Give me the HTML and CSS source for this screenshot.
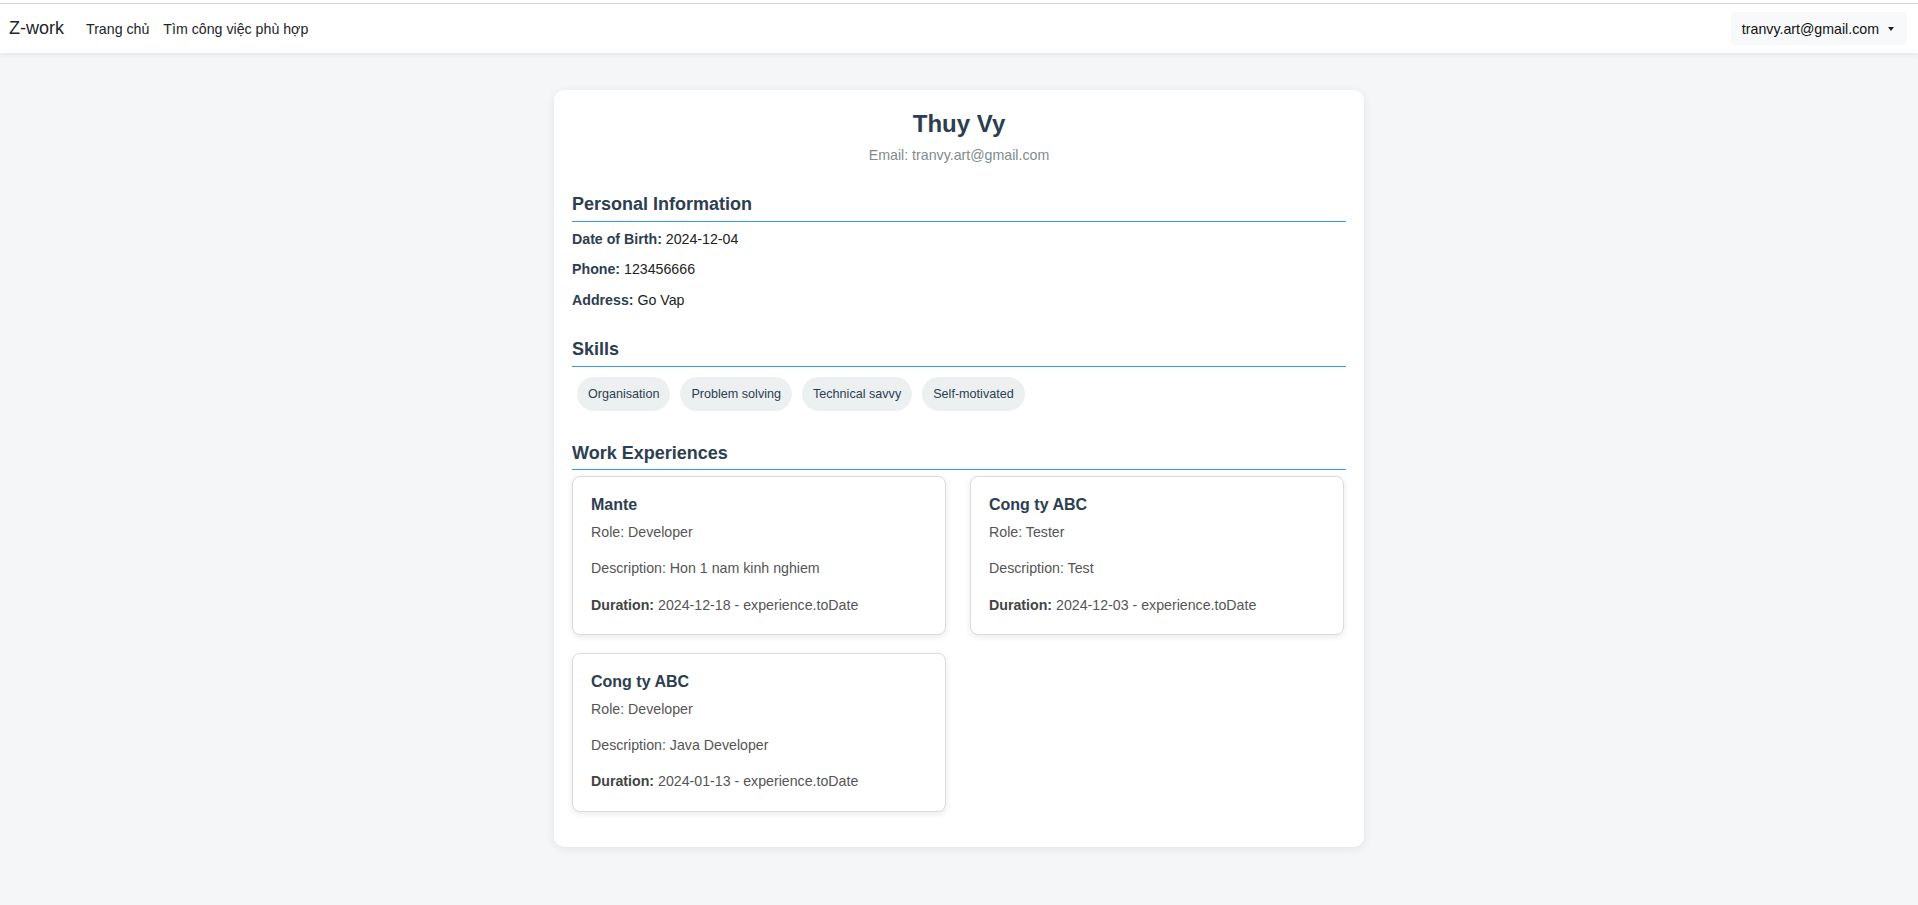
FILE: index.html
```html
<!DOCTYPE html>
<html lang="vi">
<head>
<meta charset="utf-8">
<title>Z-work - Thuy Vy</title>
<link rel="stylesheet" href="styles.css">
</head>
<body>
<header class="site-header">
  <nav class="navbar">
    <a class="brand" href="#">Z-work</a>
    <ul class="nav-links">
      <li><a href="#">Trang chủ</a></li>
      <li><a href="#">Tìm công việc phù hợp</a></li>
    </ul>
    <div class="user-menu">
      <button class="dropdown-toggle" type="button">tranvy.art@gmail.com<span class="caret"></span></button>
    </div>
  </nav>
</header>

<main class="page">
  <article class="profile-card">
    <div class="profile-head">
      <h1 class="profile-name">Thuy Vy</h1>
      <p class="profile-email">Email: tranvy.art@gmail.com</p>
    </div>

    <section class="section">
      <h2 class="section-title">Personal Information</h2>
      <p class="info-row"><strong>Date of Birth:</strong> 2024-12-04</p>
      <p class="info-row"><strong>Phone:</strong> 123456666</p>
      <p class="info-row"><strong>Address:</strong> Go Vap</p>
    </section>

    <section class="section">
      <h2 class="section-title">Skills</h2>
      <div class="skill-list">
        <span class="skill">Organisation</span>
        <span class="skill">Problem solving</span>
        <span class="skill">Technical savvy</span>
        <span class="skill">Self-motivated</span>
      </div>
    </section>

    <section class="section section-work">
      <h2 class="section-title">Work Experiences</h2>
      <div class="exp-grid">
        <div class="exp-card">
          <h3 class="exp-company">Mante</h3>
          <p>Role: Developer</p>
          <p>Description: Hon 1 nam kinh nghiem</p>
          <p><strong>Duration:</strong> 2024-12-18 - experience.toDate</p>
        </div>
        <div class="exp-card">
          <h3 class="exp-company">Cong ty ABC</h3>
          <p>Role: Tester</p>
          <p>Description: Test</p>
          <p><strong>Duration:</strong> 2024-12-03 - experience.toDate</p>
        </div>
        <div class="exp-card">
          <h3 class="exp-company">Cong ty ABC</h3>
          <p>Role: Developer</p>
          <p>Description: Java Developer</p>
          <p><strong>Duration:</strong> 2024-01-13 - experience.toDate</p>
        </div>
      </div>
    </section>
  </article>
</main>
</body>
</html>
```

FILE: styles.css
```css
* {
  box-sizing: border-box;
}

html, body {
  margin: 0;
  padding: 0;
}

body {
  background: #f5f6f8;
  font-family: "Liberation Sans", Arial, sans-serif;
  font-size: 14px;
  color: #333;
  min-height: 905px;
}

/* ---------- header ---------- */
.site-header {
  background: #fff;
  padding-top: 3px;
  box-shadow: 0 2px 5px rgba(0, 0, 0, 0.07);
  position: relative;
  z-index: 1;
}

.navbar {
  display: flex;
  align-items: center;
  height: 50px;
  padding: 0 11px 0 9px;
  border-top: 1px solid #d3d3d3;
}

.brand {
  font-size: 18px;
  color: #212529;
  text-decoration: none;
  margin-right: 22px;
}

.nav-links {
  display: flex;
  gap: 14px;
  list-style: none;
  margin: 0;
  padding: 0;
}

.nav-links a {
  font-size: 14.2px;
  color: #212529;
  text-decoration: none;
}

.user-menu {
  margin-left: auto;
}

.dropdown-toggle {
  display: flex;
  align-items: center;
  height: 33px;
  padding: 0 13px 0 11px;
  background: #f8f9fa;
  border: none;
  border-radius: 4px;
  font-family: "Liberation Sans", Arial, sans-serif;
  font-size: 14.2px;
  color: #111;
}

.caret {
  display: inline-block;
  width: 0;
  height: 0;
  margin-left: 9px;
  border-top: 4px solid #222;
  border-left: 3.5px solid transparent;
  border-right: 3.5px solid transparent;
}

/* ---------- page ---------- */
.page {
  padding: 37px 0 40px;
}

.profile-card {
  width: 810px;
  margin: 0 auto;
  background: #fff;
  border-radius: 10px;
  box-shadow: 0 2px 10px rgba(0, 0, 0, 0.08);
  padding: 20px 18px 35px;
}

.profile-head {
  text-align: center;
}

.profile-name {
  margin: 0;
  font-size: 24px;
  line-height: 28.8px;
  font-weight: bold;
  color: #2c3e50;
}

.profile-email {
  margin: 5px 0 0;
  font-size: 14.2px;
  line-height: 22.4px;
  color: #7f8c8d;
}

.section {
  margin-top: 28px;
}

.section-work {
  margin-top: 27px;
}

.section-title {
  margin: 0 0 6px;
  padding-bottom: 5px;
  font-size: 18px;
  line-height: 21.6px;
  font-weight: bold;
  color: #2c3e50;
  border-bottom: 1px solid #3498db;
}

.info-row {
  margin: 0 0 8px;
  font-size: 14.2px;
  line-height: 22.4px;
  color: #222;
}

.info-row:last-child {
  margin-bottom: 0;
}

.info-row strong {
  color: #2c3e50;
}

.skill-list {
  display: flex;
  flex-wrap: wrap;
  margin-top: -1px;
}

.skill {
  margin: 5px;
  padding: 7px 11px;
  line-height: 20px;
  font-size: 12.6px;
  color: #2c3e50;
  background: #ecf0f1;
  border-radius: 17px;
}

.exp-grid {
  display: grid;
  grid-template-columns: 374px 374px;
  column-gap: 24px;
  row-gap: 18px;
  margin-top: 2px;
}

.exp-card {
  border: 1px solid #dcdcdc;
  border-radius: 8px;
  box-shadow: 0 2px 6px rgba(0, 0, 0, 0.09);
  padding: 15px 18px 18px;
  background: #fff;
}

.exp-company {
  margin: 0 0 3px;
  font-size: 16px;
  line-height: 25.6px;
  font-weight: bold;
  color: #2c3e50;
}

.exp-card p {
  margin: 0 0 14px;
  font-size: 14.2px;
  line-height: 22.4px;
  color: #555;
}

.exp-card p:last-child {
  margin-bottom: 0;
}

.exp-card strong {
  color: #444;
}
```
